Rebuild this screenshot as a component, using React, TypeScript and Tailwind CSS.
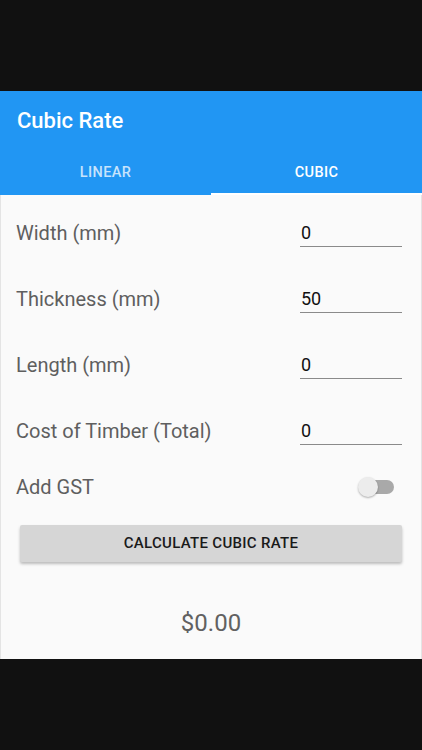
import { useState } from "react";

const fields = [
  { label: "Width (mm)", value: "0" },
  { label: "Thickness (mm)", value: "50" },
  { label: "Length (mm)", value: "0" },
  { label: "Cost of Timber (Total)", value: "0" },
];

export default function App() {
  const [gst, setGst] = useState(false);

  return (
    <div className="flex h-[750px] w-[422px] flex-col bg-[#111111] font-['Roboto','Liberation_Sans',sans-serif]">
      <div className="h-[91px] shrink-0" />

      <div className="flex h-[568px] flex-col bg-[#fafafa]">
        {/* App bar */}
        <div className="bg-[#2196f3]">
          <div className="flex h-[56px] items-center px-[17px] pt-[2px]">
            <h1 className="text-[22px] font-medium text-white">Cubic Rate</h1>
          </div>
          <div className="flex h-[48px]">
            <div className="flex flex-1 items-center justify-center pt-[3px] text-[14.5px] font-medium tracking-wide text-white/75">
              LINEAR
            </div>
            <div className="relative flex flex-1 items-center justify-center pt-[3px] text-[14.5px] font-medium tracking-wide text-white">
              CUBIC
              <span className="absolute inset-x-0 bottom-0 h-[2px] bg-white" />
            </div>
          </div>
        </div>

        {/* Form */}
        <div className="flex flex-1 flex-col border-x border-[#e4e4e4] pt-[5px]">
          {fields.map((f) => (
            <div key={f.label} className="flex h-[66px] items-center justify-between pl-[15px] pr-[19px]">
              <span className="text-[20px] text-[#5f5f5f]">{f.label}</span>
              <input
                defaultValue={f.value}
                className="h-[28px] w-[102px] border-b border-[#8a8a8a] bg-transparent pl-px text-[18px] text-[#111] outline-none"
              />
            </div>
          ))}

          <div className="flex h-[46px] items-center justify-between pl-[15px] pr-[27px]">
            <span className="text-[20px] text-[#5f5f5f]">Add GST</span>
            <button onClick={() => setGst(!gst)} className="relative h-[20px] w-[36px]">
              <span className="absolute right-0 top-[3px] h-[14px] w-[32px] rounded-full bg-[#a9a9a9]" />
              <span className="absolute left-0 top-0 h-[20px] w-[20px] rounded-full bg-[#ececec] shadow-[0_1px_2px_rgba(0,0,0,0.3)]" />
            </button>
          </div>

          <div className="mt-[15px] px-[19px]">
            <button className="h-[37px] w-full rounded-[2px] bg-[#d6d6d6] text-[15px] font-medium tracking-[0.02em] text-[#1a1a1a] shadow-[0_2px_3px_rgba(0,0,0,0.25)]">
              CALCULATE CUBIC RATE
            </button>
          </div>

          <div className="mt-[43px] text-center text-[24px] text-[#616161]">$0.00</div>
        </div>
      </div>

      <div className="flex-1" />
    </div>
  );
}
